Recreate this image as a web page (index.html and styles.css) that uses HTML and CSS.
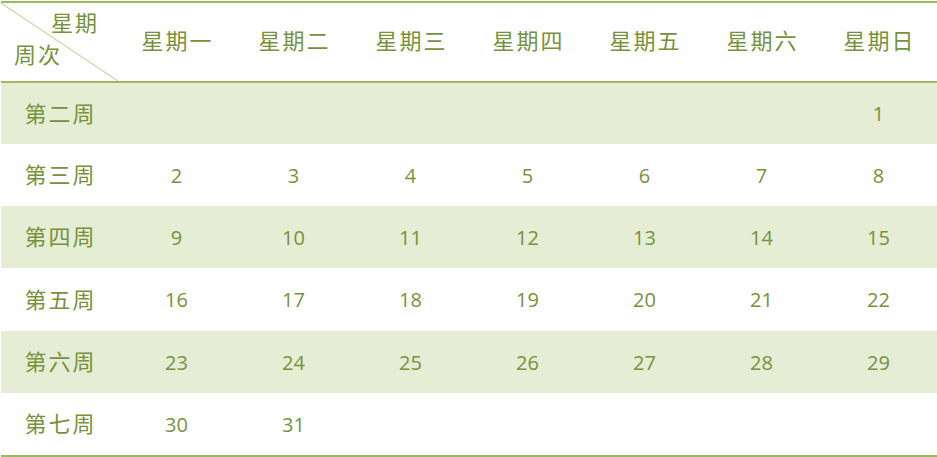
FILE: index.html
```html
<!DOCTYPE html>
<html lang="zh">
<head>
<meta charset="utf-8">
<link rel="stylesheet" href="styles.css">
</head>
<body>
<table class="cal">
  <thead>
    <tr>
      <th class="corner">
        <svg class="diag" viewBox="0 0 117 78" preserveAspectRatio="none"><line x1="0" y1="0" x2="117" y2="78" stroke="#b5cb88" stroke-width="1"/></svg>
        <span class="c-top">星期</span>
        <span class="c-bot">周次</span>
      </th>
      <th><span class="zh">星期一</span></th><th><span class="zh">星期二</span></th><th><span class="zh">星期三</span></th><th><span class="zh">星期四</span></th><th><span class="zh">星期五</span></th><th><span class="zh">星期六</span></th><th><span class="zh">星期日</span></th>
    </tr>
  </thead>
  <tbody>
    <tr class="alt"><td><span class="zh wk">第二周</span></td><td></td><td></td><td></td><td></td><td></td><td></td><td>1</td></tr>
    <tr><td><span class="zh wk">第三周</span></td><td>2</td><td>3</td><td>4</td><td>5</td><td>6</td><td>7</td><td>8</td></tr>
    <tr class="alt"><td><span class="zh wk">第四周</span></td><td>9</td><td>10</td><td>11</td><td>12</td><td>13</td><td>14</td><td>15</td></tr>
    <tr class="tall"><td><span class="zh wk">第五周</span></td><td>16</td><td>17</td><td>18</td><td>19</td><td>20</td><td>21</td><td>22</td></tr>
    <tr class="alt"><td><span class="zh wk">第六周</span></td><td>23</td><td>24</td><td>25</td><td>26</td><td>27</td><td>28</td><td>29</td></tr>
    <tr class="last"><td><span class="zh wk">第七周</span></td><td>30</td><td>31</td><td></td><td></td><td></td><td></td><td></td></tr>
  </tbody>
</table>
</body>
</html>
```
FILE: styles.css
```css
html, body {
  margin: 0;
  padding: 0;
  background: #ffffff;
}
body {
  padding: 1px 0 0 1px;
}
.cal {
  border-collapse: collapse;
  table-layout: fixed;
  width: 936px;
  color: #76923c;
  font-family: "Open Sans", "Noto Sans CJK SC", sans-serif;
  font-size: 20px;
}
.cal th, .cal td {
  width: 117px;
  padding: 0;
  text-align: center;
  vertical-align: middle;
  font-weight: 400;
}
.cal thead tr {
  height: 80px;
  border-top: 2px solid #9bbb59;
  border-bottom: 2px solid #9bbb59;
}
.cal thead th {
  padding-bottom: 6px;
}
.zh {
  font-family: "Noto Sans CJK SC", sans-serif;
  font-weight: 400;
  font-size: 22px;
  letter-spacing: 2px;
  padding-left: 2px;
}
.zh.wk {
  display: inline-block;
  margin-bottom: 4px;
}
.cal tbody tr {
  height: 62px;
}
.cal tbody tr.tall {
  height: 63px;
}
.cal tbody tr.last {
  height: 63px;
  border-bottom: 2px solid #9bbb59;
}
.cal tr.alt {
  background: #e5edd5;
}
.corner {
  position: relative;
}
.diag {
  position: absolute;
  left: 0;
  top: 0;
  width: 100%;
  height: 100%;
}
.c-top, .c-bot {
  position: absolute;
  font-family: "Noto Sans CJK SC", sans-serif;
  font-size: 22px;
  letter-spacing: 2px;
  line-height: 1;
}
.c-top {
  left: 50px;
  top: 7px;
}
.c-bot {
  left: 13px;
  top: 39px;
}
```
